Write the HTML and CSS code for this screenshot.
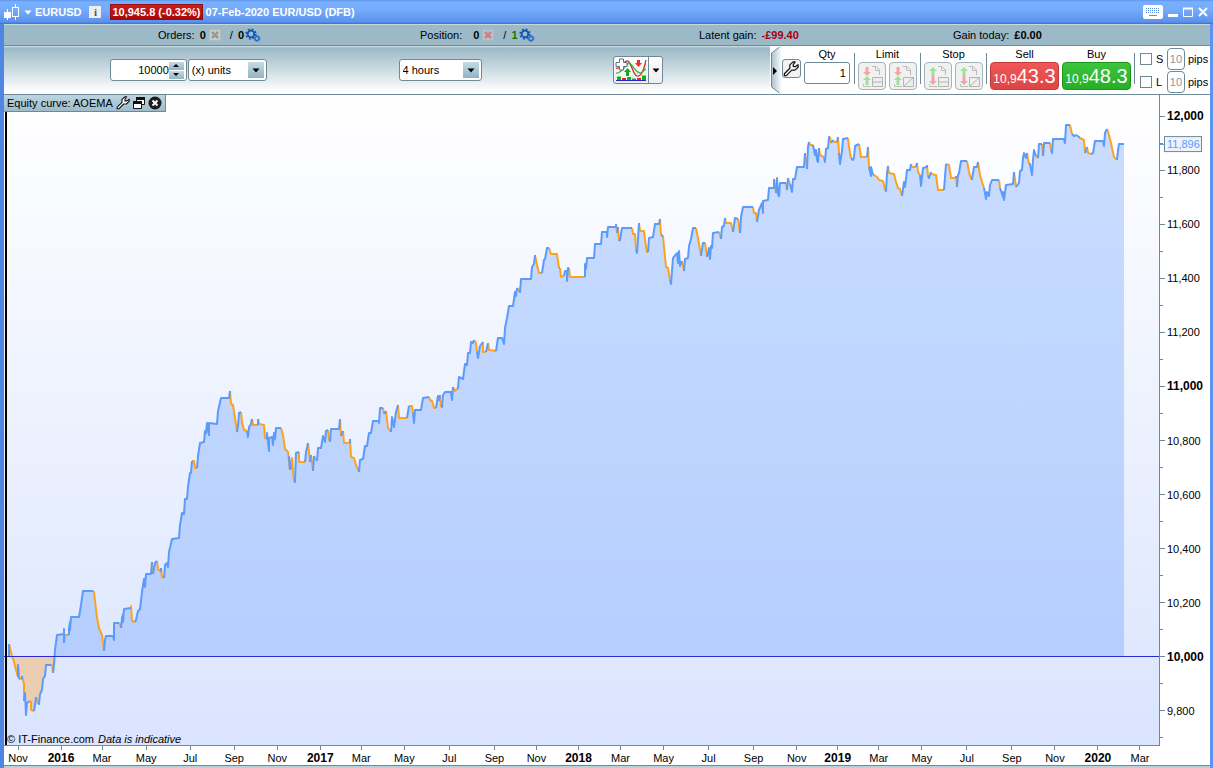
FILE: index.html
```
<!DOCTYPE html>
<html lang="en">
<head>
  <meta charset="UTF-8">
  <title>EURUSD - Equity curve</title>
  <meta name="viewport" content="width=device-width, initial-scale=1">
  <link rel="stylesheet" href="styles.css">
</head>
<body>

<svg class="defs" aria-hidden="true">
  <symbol id="gears" viewBox="0 0 16 14">
    <circle cx="6" cy="6" r="3.3" fill="#8fc0e6" stroke="#1450b4" stroke-width="1.8"/>
    <circle cx="6" cy="6" r="4.9" fill="none" stroke="#1450b4" stroke-width="1.5" stroke-dasharray="1.9 1.95"/>
    <circle cx="6" cy="6" r="1.6" fill="#9bb9c6"/>
    <circle cx="12" cy="10.5" r="2" fill="#9bb9c6" stroke="#2a6ac8" stroke-width="1.4"/>
    <circle cx="12" cy="10.5" r="3" fill="none" stroke="#2a6ac8" stroke-width="1" stroke-dasharray="1.2 1.15"/>
  </symbol>
  <symbol id="wrench" viewBox="0 0 14 14">
    <path d="M1.2 11.2 L6 6.4 V3.4 L8.8 .8 H10.6 L9 3 V4.9 H11 L13.2 3.3 V5.4 L10.4 8 H7.6 L2.9 12.8 H1.2 Z" fill="#fff" stroke="#111" stroke-width="1.1" stroke-linejoin="round"/>
  </symbol>
  <symbol id="down" viewBox="0 0 8 5"><path d="M.5 .5 H7.5 L4 4.5 Z" fill="currentColor"/></symbol>
  <symbol id="page" viewBox="0 0 24 24">
    <path d="M12 2.5 H16 L19.5 6 V11 M15.5 3 V6.5 H19" fill="none" stroke="#bcbcbc"/>
    <path d="M11 22.5 H3.5 V20" fill="none" stroke="#bcbcbc"/>
  </symbol>
  <symbol id="arr-up" viewBox="0 0 8 9"><path d="M4 0 L8 4 H5.5 V9 H2.5 V4 H0 Z" fill="#9fe09f"/></symbol>
  <symbol id="arr-dn" viewBox="0 0 8 9"><path d="M4 9 L8 5 H5.5 V0 H2.5 V5 H0 Z" fill="#f3a5a5"/></symbol>
</svg>

<div class="window">

  <header class="titlebar">
    <svg class="candles" width="17" height="18" viewBox="0 0 17 18" aria-hidden="true">
      <path d="M3.5 6 V17" stroke="#fff"/><rect x="0" y="9" width="7" height="6" fill="#fff"/>
      <path d="M11.5 1 V4 M11.5 14 V17" stroke="#fff"/><rect x="8.5" y="4.5" width="6" height="9" fill="none" stroke="#fff"/>
    </svg>
    <button class="symbol"><svg width="8" height="5" aria-hidden="true"><use href="#down"/></svg>EURUSD</button>
    <button class="info" aria-label="Information">i</button>
    <span class="quote">10,945.8 (-0.32%)</span>
    <span class="instrument">07-Feb-2020 EUR/USD (DFB)</span>
    <div class="win-buttons">
      <button aria-label="Keyboard">
        <svg width="20" height="14" viewBox="0 0 20 14">
          <rect width="20" height="14" rx="2" fill="#fff"/>
          <path d="M3 3.5 H17 M3 5.5 H17 M3 7.5 H17" stroke="#5b8fe6" stroke-dasharray="1 1"/>
          <path d="M6 10.5 H14" stroke="#5b8fe6"/>
        </svg>
      </button>
      <button aria-label="Minimise"><svg width="10" height="10"><path d="M0 8.5 H10" stroke="#fff" stroke-width="3"/></svg></button>
      <button aria-label="Maximise"><svg width="10" height="10"><path d="M.5 1 V9.5 H9.5 V1" fill="none" stroke="#fff"/><path d="M0 1.5 H10" stroke="#fff" stroke-width="2"/></svg></button>
      <button aria-label="Close"><svg width="10" height="10"><path d="M1 1 L9 9 M9 1 L1 9" stroke="#fff" stroke-width="2"/></svg></button>
    </div>
  </header>

  <div class="status">
    <div class="stat">
      <span>Orders:</span><b>0</b>
      <svg width="12" height="12" viewBox="0 0 12 12" aria-hidden="true"><rect x=".5" y=".5" width="11" height="11" fill="#c9cccb" stroke="#b4bcbf"/><path d="M3 3 L9 9 M9 3 L3 9" stroke="#959a9a" stroke-width="2.5"/></svg>
      <b class="slash">/</b><b>0</b>
      <svg class="gears" width="16" height="14" aria-hidden="true"><use href="#gears"/></svg>
    </div>
    <div class="stat">
      <span class="wide">Position:</span><b>0</b>
      <svg width="12" height="12" viewBox="0 0 12 12" aria-hidden="true"><rect x=".5" y=".5" width="11" height="11" fill="#b9c3ca" stroke="#a9bbc4"/><path d="M3 3 L9 9 M9 3 L3 9" stroke="#cf7f86" stroke-width="2.5"/></svg>
      <b class="slash">/</b><b class="up">1</b>
      <svg class="gears" width="16" height="14" aria-hidden="true"><use href="#gears"/></svg>
    </div>
    <div class="stat"><span>Latent gain:</span><b class="loss">-£99.40</b></div>
    <div class="stat"><span>Gain today:</span><b>£0.00</b></div>
  </div>

  <div class="toolbar">
    <div class="range">
      <div class="field spinner">
        <input type="number" value="10000" aria-label="Number of units">
        <span class="steps">
          <button aria-label="More"><svg width="6" height="3" viewBox="0 0 6 3"><path d="M0 3 L3 0 L6 3 Z"/></svg></button>
          <button aria-label="Less"><svg width="6" height="3" viewBox="0 0 6 3"><path d="M0 0 L3 3 L6 0 Z"/></svg></button>
        </span>
      </div>
      <div class="field drop units">
        <select aria-label="Range unit"><option>(x) units</option><option>days</option></select>
        <span class="drop-btn"><svg width="8" height="5" aria-hidden="true"><use href="#down"/></svg></span>
      </div>
    </div>

    <div class="field drop period">
      <select aria-label="Period"><option>4 hours</option><option>1 day</option></select>
      <span class="drop-btn"><svg width="8" height="5" aria-hidden="true"><use href="#down"/></svg></span>
    </div>

    <div class="indicators">
      <button aria-label="Add indicator">
        <svg width="32" height="24" viewBox="0 0 32 24">
          <path d="M1 14 C5 18 11 5 14 4 C18 6 19 16 24 16 C27 17 29 9 31 2 V10 C28 15 25 15 22 16 C17 11 15 5 12 8 C8 13 5 16 1 14 Z" fill="#a5dca5" opacity=".7"/>
          <path d="M1 10 C5 13 9 1 13 3 C17 6 18 17 22 18 C27 19 29 10 31 2" fill="none" stroke="#c8282d" stroke-width="1.2"/>
          <path d="M1 15 C6 17 11 5 14 5 C18 6 20 15 26 15 L31 11" fill="none" stroke="#35b435" stroke-width="1.2"/>
          <path d="M12.5 10 L16 14 H14 V18 H11 V14 H9 Z" fill="#0cae18"/>
          <path d="M23.5 9 L27 5 H25 V2 H22 V5 H20 Z" fill="#ef2b2f"/>
          <path d="M4.5 1 H8.5 V4.5 H12 V8.5 H8.5 V12 H4.5 V8.5 H1 V4.5 H4.5 Z" fill="#fff" stroke="#607080"/>
          <path d="M2 18.5 H6 V22 H2 Z M12 19 H16 V22 H12 Z M17 20.5 H21 V22 H17 Z M27 17.5 H31 V22 H27 Z" fill="#0cb414"/>
          <path d="M7 20 H11 V22 H7 Z M22 20 H26 V22 H22 Z" fill="#e0282c"/>
          <path d="M1 22.5 H31" stroke="#2222d8"/>
        </svg>
      </button>
      <button class="more" aria-label="Indicator list"><svg width="8" height="5"><use href="#down"/></svg></button>
    </div>

    <div class="trade">
      <button class="handle" aria-label="Collapse panel">
        <svg width="12" height="47" viewBox="0 0 12 47">
          <defs><linearGradient id="fold"><stop offset="0" stop-color="#a9c2cc"/><stop offset="1" stop-color="#fff"/></linearGradient></defs>
          <path d="M9.5 0 L1.5 6 V40 L9.5 46 H12 V0 Z" fill="url(#fold)"/>
          <path d="M9.5 0 L1.5 6 V40 L9.5 46" fill="none" stroke="#6f8a97"/>
          <path d="M3 20 L7 24 L3 28 Z"/>
        </svg>
      </button>
      <button class="tool" aria-label="Order settings"><svg width="16" height="16"><use href="#wrench"/></svg></button>
      <div class="group qty">
        <label for="qty">Qty</label>
        <input class="field" id="qty" type="text" value="1">
      </div>
      <div class="group split">
        <span>Limit</span>
        <div class="pair">
          <button class="order" aria-label="Limit order"><svg width="24" height="24"><use href="#page"/><use href="#arr-dn" x="3" y="3" width="8" height="9"/><use href="#arr-up" x="3" y="12" width="8" height="9"/><path d="M12.5 13.5 H22.5 V22.5 H12.5 Z M12.5 18 H22.5" fill="#eee" stroke="#b4b4b4"/></svg></button>
          <button class="order" aria-label="Sloped limit order"><svg width="24" height="24"><use href="#page"/><use href="#arr-dn" x="3" y="3" width="8" height="9"/><use href="#arr-up" x="3" y="12" width="8" height="9"/><path d="M12.5 13.5 H22.5 V22.5 H12.5 Z M12.5 22.5 L22.5 13.5" fill="#eee" stroke="#b4b4b4"/></svg></button>
        </div>
      </div>
      <div class="group split">
        <span>Stop</span>
        <div class="pair">
          <button class="order" aria-label="Stop order"><svg width="24" height="24"><use href="#page"/><use href="#arr-up" x="3" y="3" width="8" height="9"/><use href="#arr-dn" x="3" y="12" width="8" height="9"/><path d="M12.5 13.5 H22.5 V22.5 H12.5 Z M12.5 18 H22.5" fill="#eee" stroke="#b4b4b4"/></svg></button>
          <button class="order" aria-label="Sloped stop order"><svg width="24" height="24"><use href="#page"/><use href="#arr-up" x="3" y="3" width="8" height="9"/><use href="#arr-dn" x="3" y="12" width="8" height="9"/><path d="M12.5 13.5 H22.5 V22.5 H12.5 Z M12.5 22.5 L22.5 13.5" fill="#eee" stroke="#b4b4b4"/></svg></button>
        </div>
      </div>
      <div class="group split">
        <span>Sell</span>
        <button class="price sell"><small>10,9</small>43.3</button>
      </div>
      <div class="group">
        <span>Buy</span>
        <button class="price buy"><small>10,9</small>48.3</button>
      </div>
      <div class="protect">
        <div class="row">
          <input type="checkbox" id="stop-on"><label for="stop-on">S</label>
          <input class="field" type="text" id="stop-pips" value="10" disabled><label for="stop-pips">pips</label>
        </div>
        <div class="row">
          <input type="checkbox" id="limit-on"><label for="limit-on">L</label>
          <input class="field" type="text" id="limit-pips" value="10" disabled><label for="limit-pips">pips</label>
        </div>
      </div>
    </div>
  </div>

  <main class="chart">
    <div class="plot">
      <svg id="curve" viewBox="4 95 1155 650" preserveAspectRatio="none" role="img" aria-label="Equity curve of AOEMA">
        <clipPath id="above"><rect x="4" y="95" width="1155" height="561"/></clipPath>
        <clipPath id="below"><rect x="4" y="656" width="1155" height="89"/></clipPath>
      </svg>
      <div class="pane-tab">
        <span>Equity curve: AOEMA</span>
        <button aria-label="Settings"><svg width="14" height="14"><use href="#wrench"/></svg></button>
        <button aria-label="Detach">
          <svg width="12" height="12" viewBox="0 0 12 12"><path d="M3.5 .5 H11.5 V7.5 H3.5 Z" fill="#fff" stroke="#111"/><path d="M3 1.5 H12" stroke="#111" stroke-width="3"/><path d="M.5 4.5 H8.5 V11.5 H.5 Z" fill="#fff" stroke="#111"/><path d="M0 5.5 H9" stroke="#111" stroke-width="3"/></svg>
        </button>
        <button aria-label="Close pane">
          <svg width="14" height="14" viewBox="0 0 14 14"><circle cx="7" cy="7" r="6.5" fill="#1c1c1c"/><path d="M4.5 4.5 L9.5 9.5 M9.5 4.5 L4.5 9.5" stroke="#fff" stroke-width="2"/></svg>
        </button>
      </div>
      <p class="credit">© IT-Finance.com <i>Data is indicative</i></p>
    </div>
    <svg id="price-axis" class="price-axis"></svg>
    <svg id="time-axis" class="time-axis"></svg>
  </main>
</div>

<script>
(() => {
  const NS = 'http://www.w3.org/2000/svg';
  const view = { x: 4, y: 95, w: 1155, h: 650 };
  const baseY = 656;

  // b = rising run, o = falling run
  const runs = `
b 9,657 9,644
o 11,652 12,656 14,662 16,670 18,677
b 18,665 19,679
o 22,679
b 22,676
o 24,684 24,701
b 25,693 26,715 27,703 30,701
o 31,702 31,710 34,711
b 35,705 36,697
o 38,704
b 39,704 40,694 42,690 43,679 45,676 46,665 51,665
o 52,665 53,673
b 54,665 55,650 57,635 64,634 64,629 64,643
o 65,635 69,635
b 69,628 70,622 70,630 71,617 79,617 81,605 83,591 93,591
o 94,592 97,618 99,628 102,635 104,651
b 105,640 106,636 113,636 114,640 114,623 119,623
o 120,624 121,628
b 122,618 123,614 123,622 124,609 131,608
o 131,606 132,621 135,622
b 136,620 138,611 140,609 142,592 144,579 145,587 146,574 151,574 152,562
o 153,574
b 155,563 157,561
o 158,569 161,572
b 161,568
o 162,577 164,578
b 165,565 167,563 168,567 169,552 172,539 179,538 180,525 182,513 184,514 185,499 187,499 188,487 190,473 191,473 192,461
o 194,461 195,468 197,468
b 198,456 200,443 204,442 205,431 206,433 207,423 209,435 209,423 217,424 218,411 221,398 229,398 230,391
o 231,404 233,405 235,418 237,432
b 238,426 239,413 241,412
o 242,422 244,430 247,431
b 248,437 249,427 251,424 252,419
o 253,425 258,425
b 258,419
o 259,424 264,425 265,438 267,439
b 267,433 269,451 269,438 272,437 273,445 274,433 275,439 276,428 281,428
o 283,435 285,449 288,452 290,470
b 289,457 291,469
o 292,458 293,472 294,481
b 295,482 296,453 299,452
o 299,462 305,462
b 306,452 307,448 308,443
o 310,462
b 311,455
o 313,471
b 314,456
o 317,461
b 318,448 321,448 323,436 325,442 326,431 328,430
o 329,440
b 330,441 331,429 339,429 340,419
o 341,436
b 343,431
o 344,443 350,443
b 350,439
o 351,457 354,458 356,465 359,472
b 360,460 363,459 365,446 367,446 369,433 371,433 373,421 379,421 379,423 380,408 383,408
o 384,414
b 386,411
o 388,428 391,432
b 392,417 394,427 396,412 398,405
o 399,418 407,418
b 409,406
o 412,406 413,413
b 414,423 415,410 421,410 423,398 429,397
o 430,400 432,401 434,408 436,408
b 438,396 439,400 440,395
o 441,407
b 442,407 443,395 445,392 451,392 452,400 453,387
o 455,391 457,389
b 458,388 459,377 463,379 465,364 467,365 468,353 470,353 471,342 473,343 474,340
o 476,343 477,352
b 478,358 480,346 483,342
o 483,352 486,352
b 488,343
o 489,350 496,351
b 498,338 502,338 504,344 505,328 507,318 509,306 513,306 515,292 516,296 517,288
o 519,290
b 520,292 521,279 531,279 532,267 534,264 535,255
o 537,265 539,273 542,273
b 544,260 545,259 547,248 549,248
o 551,254 557,254 559,268
b 560,268
o 561,277 564,276
b 565,271 567,271 567,281 568,268 569,268
o 570,277 585,277
b 585,264 586,269 587,258 594,258 595,244 601,244 602,232 607,232 607,237 608,227 616,227 616,224
o 617,233
b 618,227
o 619,241
b 620,240 622,228 632,228
o 633,234 635,234 636,250
b 637,253 639,223
o 640,231 644,231 646,247 647,252 648,252
b 649,238 653,237 655,224 659,224 660,219
o 661,235
b 663,236
o 664,247 666,267 668,268 670,280
b 671,284 673,258 677,253 678,263 679,251 680,266 682,261
o 684,271
b 685,259 688,258 689,246 691,239 693,228 696,228
o 698,238 701,256
b 703,243 705,243
o 707,257
b 709,248 710,259 711,246 712,248 713,233 719,232
o 721,239
b 722,227 724,226 725,218
o 726,223 731,223 733,232
b 735,218 738,219
o 740,233
b 741,217 743,207 753,207
o 754,213 756,213 757,222
b 759,210 762,203 763,213 763,201 768,200 769,188 774,188 774,179
o 776,193
b 777,178 778,195
o 779,197
b 780,183 786,183
o 787,190
b 788,178
o 790,184
b 792,192 793,179 795,179 797,167 804,167 805,153
o 807,169
b 808,147 809,142
o 810,145 813,145
b 815,155 816,150 817,160 818,162 819,148
o 820,155 824,157
b 825,162 826,149 828,148 829,137 830,137
o 831,143
b 833,140
o 834,142 837,142
b 838,137
o 839,153
b 840,164 842,151 843,139 848,138
o 849,147 851,158
b 853,160 854,157 855,146 859,144
o 861,157 867,157
b 868,147
o 869,167
b 871,176 871,167 873,175
o 874,175 877,177 879,180 883,181 885,189
b 886,191 887,173 888,166
o 889,173 894,174 896,182 898,188 900,189 902,196
b 904,182 905,187 907,170 910,170 911,164
o 912,167 916,167
b 917,163
o 918,172 920,175
b 921,186 923,168 927,167 927,165
o 928,176
b 929,178 931,172
o 931,174 936,175 938,190 944,190
b 946,164
o 949,165 951,178 956,178
b 956,176
o 957,187
b 958,175 959,173 961,161 967,161
o 969,172 971,179
b 972,179 974,167 977,167 978,162
o 980,175 982,182 984,188
b 986,199 987,192 989,196 990,185 992,180 999,180
o 1000,188
b 1003,197 1003,192 1004,200 1006,185 1013,184 1014,172
o 1016,187
b 1019,183 1020,171 1022,170 1023,158 1024,153 1026,158 1027,153
o 1029,164
b 1030,164 1032,175 1033,160 1034,150 1036,156
o 1038,158
b 1039,144 1042,144
o 1043,156
b 1044,143 1050,143
o 1051,150
b 1052,153 1053,139 1064,139 1065,143 1066,125 1070,125
o 1072,134
b 1074,136 1077,135
o 1078,136
b 1080,138
o 1082,139 1084,140 1085,153
b 1087,147
o 1088,153 1091,154
b 1093,153 1095,141 1103,141 1104,146 1105,133 1107,129
o 1109,135 1111,143 1114,157 1117,160
b 1118,150 1119,144 1124,144`.trim().split('\n').map(line => {
    const [kind, ...pts] = line.split(' ');
    return { kind, pts };
  });

  function add(parent, name, attrs, text) {
    const el = document.createElementNS(NS, name);
    for (const key in attrs) el.setAttribute(key, attrs[key]);
    if (text) el.textContent = text;
    parent.appendChild(el);
    return el;
  }

  const curve = document.getElementById('curve');
  const all = runs.flatMap(r => r.pts);
  const area = `M9,${baseY} L${all.join(' ')} L1124,${baseY} Z`;
  add(curve, 'path', { d: area, class: 'gain', 'clip-path': 'url(#above)' });
  add(curve, 'path', { d: area, class: 'drawdown', 'clip-path': 'url(#below)' });

  let last = runs[0].pts[0];
  const lines = { b: '', o: '' };
  runs.forEach(r => {
    lines[r.kind] += `M${last} L${r.pts.join(' ')} `;
    last = r.pts[r.pts.length - 1];
  });
  add(curve, 'path', { d: lines.o, class: 'trace falling' });
  add(curve, 'path', { d: lines.b, class: 'trace rising' });
  add(curve, 'path', { d: `M4,${baseY + .5} H1159`, class: 'baseline' });
  add(curve, 'path', { d: 'M6,112 V745', class: 'edge' });

  // price axis: 200 points take 54 units
  const priceAxis = document.getElementById('price-axis');
  const priceY = p => 116 + (12000 - p) * 54 / 200;
  const pctY = y => (y - view.y) / view.h * 100 + '%';
  for (let p = 12000; p >= 9700; p -= 100) {
    const y = pctY(priceY(p));
    const major = p % 200 === 0;
    add(priceAxis, 'line', { x1: 0, x2: major ? 5 : 3, y1: y, y2: y });
    if (major) {
      add(priceAxis, 'text', { x: 7, y, dy: 4, class: p % 1000 ? '' : 'strong' }, p.toLocaleString('en-US'));
    }
  }
  const nowY = pctY(144);
  add(priceAxis, 'line', { x1: 0, x2: 4, y1: nowY, y2: nowY, class: 'now-tick' });
  const now = add(priceAxis, 'svg', { x: 4, y: nowY, width: 40, height: 20, overflow: 'visible' });
  add(now, 'rect', { x: .5, y: -7.5, width: 37, height: 15, class: 'now-box' });
  add(now, 'text', { x: 3, y: 4, class: 'now-text' }, '11,896');

  const timeAxis = document.getElementById('time-axis');
  const stamps = [18, 61, 102, 146, 190, 234, 277, 320, 361, 404, 449, 494, 536, 578, 620, 663, 708, 753,
    796, 837, 878, 921, 966, 1011, 1054, 1097, 1139];
  const names = ['Nov', '', 'Mar', 'May', 'Jul', 'Sep'];
  let year = 2016;
  stamps.forEach((x, i) => {
    const left = (x - view.x) / view.w * 100 + '%';
    const month = names[i % 6];
    add(timeAxis, 'line', { x1: left, x2: left, y1: 0, y2: 4 });
    add(timeAxis, 'text', { x: left, y: 16, class: month ? '' : 'strong' }, month || String(year++));
  });
})();
</script>

</body>
</html>
```
FILE: styles.css
```
:root {
  --frame: #5b95ef;
  --bar: #9bb9c6;
  --line: #6f8a97;
  --rise: #5c9afc;
  --fall: #fba321;
}

* { box-sizing: border-box; }

body {
  margin: 0;
  font: 11px/14px "Liberation Sans", Arial, sans-serif;
  color: #000;
}

button, input, select { font: inherit; color: inherit; }

button {
  display: flex; align-items: center; justify-content: center;
  padding: 0; border: 0; background: none; cursor: pointer;
}

svg { display: block; flex: none; }

.defs { position: absolute; width: 0; height: 0; }

.window {
  display: flex; flex-direction: column;
  min-height: 100vh;
  background: #fff;
  border: solid var(--frame);
  border-width: 0 3px 0 4px;
  border-left-color: #4f86e4;
}

/* title bar */
.titlebar {
  display: flex; align-items: center;
  height: 24px;
  margin: 0 -3px 0 -4px;
  padding: 0 5px 0 4px;
  background: linear-gradient(#5f96ec 0, #78b0ff 2px, #74abfc 10px, #5a91ec 22px, #3b6cd2 24px);
  color: #fff; font-weight: bold;
}

.symbol { gap: 3px; margin-left: 3px; font-weight: bold; }

.info {
  width: 12px; height: 12px; margin: 0 9px 0 8px;
  background: #eee; color: #555;
  font: bold 11px/12px "Liberation Serif", serif;
}

.quote {
  padding: 0 1px; margin-right: 3px;
  background: linear-gradient(#d01c1c, #a80808);
  border: 1px solid #8f1212;
  white-space: nowrap;
}

.instrument { white-space: nowrap; }

.win-buttons { display: flex; align-items: center; gap: 5px; margin-left: auto; }

/* account line */
.status {
  display: grid; align-items: center;
  grid-template-columns: 154fr 262fr 279fr 254fr 257fr;
  height: 22px;
  background: var(--bar);
  border-top: 1px solid #c4d8e0;
  border-bottom: 1px solid var(--line);
}

.stat { display: flex; align-items: center; gap: 5px; white-space: nowrap; }
.stat:first-child { grid-column: 2; }
.stat svg { margin-left: -2px; }
.stat .wide { margin-right: 6px; }
.stat .slash { margin-left: 4px; font-weight: normal; }
.stat .gears { margin-left: -4px; }
.up { color: #0a7a0a; }
.loss { color: #a8000c; }

/* toolbar */
.toolbar {
  display: grid; align-items: center;
  grid-template-columns: 106fr auto 132fr auto 132fr auto 107fr auto;
  height: 49px;
  background: linear-gradient(#d6e4ea 0, #9bb9c6 2px, #fff 46px);
  border-bottom: 1px solid var(--line);
}

.range { grid-column: 2; display: flex; gap: 1px; }
.period { grid-column: 4; width: 83px; }
.indicators { grid-column: 6; }
.trade { grid-column: 8; }

.field {
  height: 22px;
  background: #fff;
  border: 1px solid var(--line); border-radius: 3px;
}

.spinner { display: flex; align-items: center; width: 77px; padding-right: 2px; }

.spinner input {
  flex: 1; min-width: 0; padding: 0;
  border: 0; background: none; outline: none;
  text-align: right;
  appearance: textfield;
}

.spinner input::-webkit-inner-spin-button { appearance: none; margin: 0; }

.steps { display: flex; flex-direction: column; gap: 1px; }

.steps button, .drop-btn { background: linear-gradient(#c4dbe5, #93b4c3); }
.steps button { width: 15px; height: 8px; }

.drop { position: relative; }
.units { width: 79px; }

.drop select {
  width: 100%; height: 100%;
  padding: 0 20px 0 3px;
  border: 0; background: none; outline: none;
  appearance: none;
}

.drop-btn {
  position: absolute; right: 2px; top: 2px; bottom: 2px;
  display: grid; place-items: center;
  width: 16px;
  pointer-events: none;
}

.indicators {
  display: flex;
  height: 28px;
  background: linear-gradient(#fff, #eee);
  border: 1px solid var(--line); border-radius: 3px;
}

.indicators button { width: 34px; }
.indicators .more { width: 14px; border-left: 1px solid var(--line); }

/* order panel */
.trade {
  display: flex;
  height: 48px;
  background: #fff;
}

.tool {
  width: 19px; height: 19px; margin: 13px 3px 0 0;
  background: #f2f2f2;
  border: 1px solid var(--line); border-radius: 3px;
}

.group {
  display: flex; flex-direction: column; align-items: center;
  padding: 1px 3px 0 0;
}

.group > span, .group > label { line-height: 15px; }

.group.split { position: relative; padding-left: 4px; }
.group.split::before, .protect::before {
  content: ""; position: absolute; left: 0; top: 7px; bottom: 10px;
  border-left: 1px solid var(--line);
}

.group.qty { padding-right: 4px; }
.qty input { width: 46px; padding: 0 3px; text-align: right; }

.pair { display: flex; gap: 3px; }

.order {
  width: 28px; height: 28px;
  background: #f0f1f1;
  border: 1px solid #a3b4bc; border-radius: 4px;
}

.price {
  align-items: baseline;
  width: 69px; height: 28px;
  border-radius: 4px;
  color: #fff; font-size: 20px; line-height: 27px;
}

.price small { font-size: 12px; }
.sell { background: linear-gradient(#ef5858, #de4444); border: 1px solid #c43a3a; }
.buy { background: linear-gradient(#3cc43c, #26ae26); border: 1px solid #1b951b; }

.protect {
  position: relative;
  display: flex; flex-direction: column; gap: 1px;
  padding: 2px 2px 0 3px;
}

.row { display: flex; align-items: center; }

.row input[type="checkbox"] {
  width: 12px; height: 12px; margin: 0 4px 0 3px;
  appearance: none;
  background: #fff; border: 1px solid var(--line);
}

.row input[type="checkbox"]:checked { background: var(--line); }
.row label { width: 11px; }
.row .field { width: 18px; padding: 0; border-radius: 4px; text-align: center; color: #8c959c; }
.row .field + label { width: 23px; padding-left: 3px; }

/* chart */
.chart {
  flex: 1;
  display: grid;
  grid-template: 1fr 20px / 1fr 50px;
  border-bottom: 2px solid #b5d3dc;
  box-shadow: inset 0 -1px var(--line);
}

.plot {
  position: relative;
  min-height: 300px;
  background: linear-gradient(#fff, #fbfcff 12%, #dae4fe);
  border-right: 1px solid var(--line);
  border-bottom: 1px solid var(--line);
}

#curve { position: absolute; inset: 0; width: 100%; height: 100%; }

.gain { fill: rgba(98, 155, 255, .33); }
.drawdown { fill: rgba(251, 175, 85, .45); }
.trace { fill: none; stroke-width: 2; stroke-linejoin: round; vector-effect: non-scaling-stroke; }
.rising { stroke: var(--rise); }
.falling { stroke: var(--fall); }
.baseline { stroke: #2a2ad2; vector-effect: non-scaling-stroke; }
.edge { stroke: #000; stroke-width: 2; vector-effect: non-scaling-stroke; }

.pane-tab {
  position: absolute; left: 0; top: 0;
  display: flex; align-items: center; gap: 3px;
  height: 17px; padding: 0 3px;
  background: linear-gradient(#bcd5e0, #9dbccb);
  border: solid var(--line); border-width: 0 1px 1px 0;
}

.credit { position: absolute; left: 3px; bottom: 0; margin: 0; line-height: 11px; }
.credit i { margin-left: 1px; }

.price-axis { width: 50px; height: 100%; overflow: visible; }
.time-axis { width: 100%; height: 20px; overflow: visible; }
.price-axis line, .time-axis line { stroke: var(--line); shape-rendering: crispEdges; }
.price-axis .now-tick { stroke: var(--rise); }
.time-axis text { text-anchor: middle; }
.strong { font-size: 12px; font-weight: bold; }
.now-box { fill: #eef3fb; stroke: var(--line); }
.now-text { fill: var(--rise); }
```
